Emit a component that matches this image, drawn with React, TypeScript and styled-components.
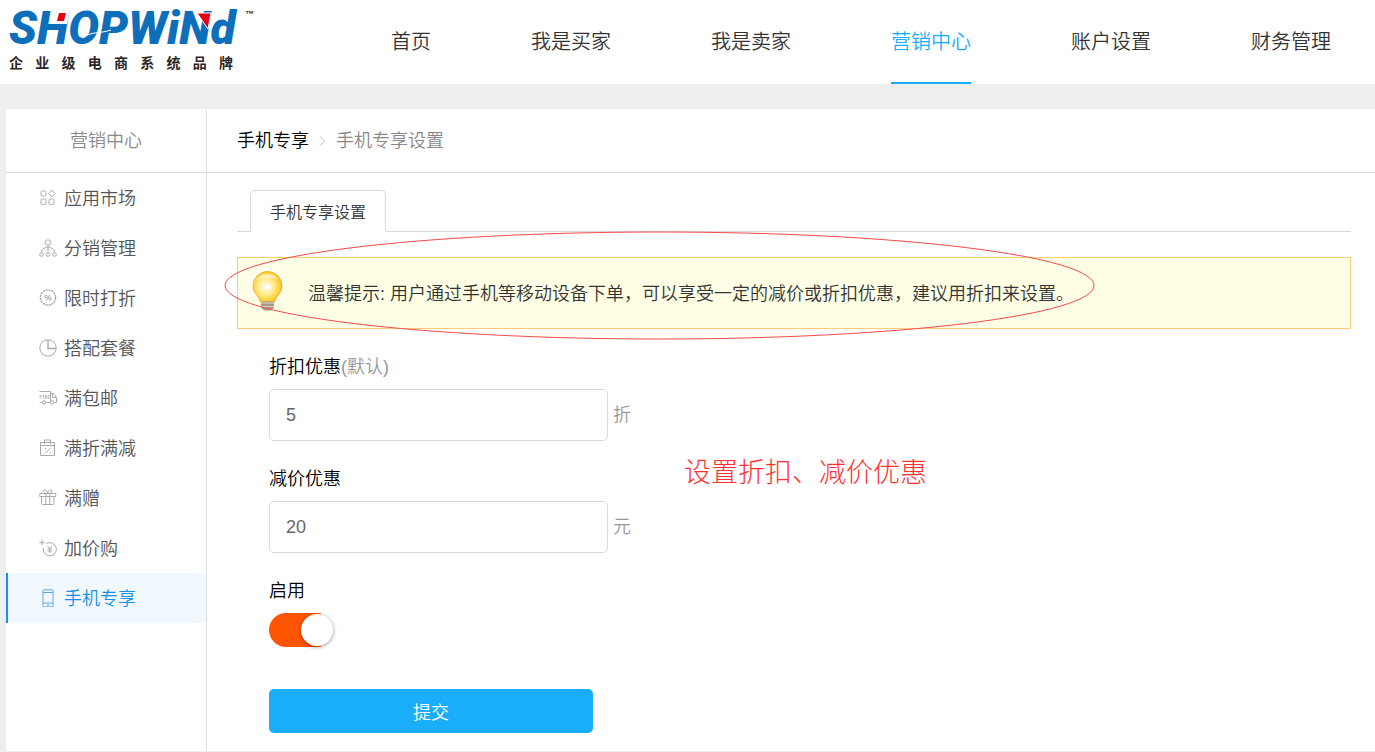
import React, { useState } from "react";
import styled, { createGlobalStyle } from "styled-components";

const sans = `"Liberation Sans", "Noto Sans CJK SC", sans-serif`;

const GlobalStyle = createGlobalStyle`
  *, *::before, *::after { box-sizing: border-box; }
  body {
    margin: 0;
    background: #edefee;
    font-family: ${sans};
    font-size: 18px;
    font-weight: 350;
    line-height: 24px;
    color: #555;
  }
  a { color: inherit; text-decoration: none; }
  button, input { font-family: inherit; font-size: inherit; font-weight: inherit; }
`;

const Header = styled.header`
  display: flex;
  justify-content: space-between;
  height: 84px;
  padding: 0 44px 0 9px;
  background: #fff;
`;

const Brand = styled.a`
  display: flex;
  flex-direction: column;
`;

const Tagline = styled.span`
  display: flex;
  justify-content: space-between;
  width: 224px;
  margin-top: -2px;
  font-size: 14px;
  font-weight: 700;
  line-height: 18px;
  color: #2b2523;
`;

const Nav = styled.nav`
  display: flex;
  gap: 100px;
`;

const NavLink = styled.a<{ $active?: boolean }>`
  display: flex;
  align-items: center;
  padding-top: 2px;
  border-bottom: 2px solid ${(p) => (p.$active ? "#1aadfb" : "transparent")};
  font-size: 20px;
  white-space: nowrap;
  color: ${(p) => (p.$active ? "#1aadfb" : "#333")};
`;

const Panel = styled.div`
  display: grid;
  grid-template-columns: 201px 1fr;
  margin: 25px 0 1px 6px;
  background: #fff;
`;

const Sidebar = styled.aside`
  border-right: 1px solid #ddd;
`;

const SideTitle = styled.h2`
  display: flex;
  align-items: center;
  justify-content: center;
  height: 64px;
  margin: 0;
  border-bottom: 1px solid #ddd;
  font-size: 18px;
  font-weight: inherit;
  color: #888;
`;

const SideLink = styled.a<{ $active?: boolean }>`
  display: flex;
  align-items: center;
  gap: 7px;
  height: 50px;
  padding-left: 31px;
  border-left: 2px solid ${(p) => (p.$active ? "#1890e8" : "transparent")};
  background: ${(p) => (p.$active ? "#f1f8ff" : "transparent")};
  color: ${(p) => (p.$active ? "#1890e8" : "#555")};

  svg {
    color: ${(p) => (p.$active ? "#5fa8ee" : "#aaa")};
  }

  span {
    padding-top: 2px;
  }
`;

const Crumbs = styled.nav`
  display: flex;
  align-items: center;
  gap: 10px;
  height: 64px;
  padding-left: 30px;
  border-bottom: 1px solid #ddd;
  color: #888;

  a { color: #000; }
`;

const Content = styled.div`
  padding: 17px 24px 18px 30px;
`;

const Tabs = styled.div`
  display: flex;
  height: 42px;
  padding-left: 13px;
  border-bottom: 1px solid #d9d9d9;
`;

const Tab = styled.button`
  height: 42px;
  padding: 0 19px;
  border: 1px solid #d9d9d9;
  border-bottom-color: #fff;
  border-radius: 5px 5px 0 0;
  background: #fff;
  font-size: 16px;
  color: #333;
`;

const Tip = styled.div`
  position: relative;
  display: flex;
  align-items: center;
  gap: 20px;
  min-height: 72px;
  margin-top: 25px;
  padding-left: 10px;
  border: 1px solid #fbcb7c;
  background: #ffffe5;
  color: #333;

  p {
    margin: 0;
    padding-top: 2px;
  }
`;

const Ring = styled.svg`
  position: absolute;
  left: -14px;
  top: -27px;
  pointer-events: none;
`;

const Form = styled.form`
  position: relative;
  display: flex;
  flex-direction: column;
  align-items: flex-start;
  gap: 26px;
  padding: 26px 0 0 32px;
`;

const Note = styled.span`
  position: absolute;
  left: 447px;
  top: 128px;
  font-family: "Liberation Serif", "Noto Sans CJK SC", serif;
  font-size: 27px;
  font-weight: 300;
  line-height: 32px;
  color: #ff3030;
`;

const Field = styled.div`
  display: flex;
  flex-direction: column;
  gap: 10px;
`;

const Label = styled.label`
  color: #000;
`;

const Muted = styled.span`
  color: #999;
`;

const InputRow = styled.div`
  display: flex;
  align-items: center;
  gap: 5px;
`;

const TextInput = styled.input`
  width: 339px;
  height: 52px;
  padding: 0 16px;
  border: 1px solid #d9d9d9;
  border-radius: 5px;
  background: #fff;
  font-weight: 400;
  color: #666;
`;

const Switch = styled.input`
  appearance: none;
  display: flex;
  align-items: center;
  width: 65px;
  height: 34px;
  margin: 0;
  padding: 0 1px;
  border-radius: 17px;
  background: #dfdfdf;
  cursor: pointer;

  &::before {
    content: "";
    width: 32px;
    height: 32px;
    border-radius: 50%;
    background: #fff;
    box-shadow: 0 1px 4px rgba(0, 0, 0, 0.4);
  }

  &:checked {
    justify-content: flex-end;
    background: linear-gradient(to right, #ff5500 52px, #fff 52px);
  }
`;

const Submit = styled.button`
  width: 324px;
  height: 44px;
  margin-top: 16px;
  border: 0;
  border-radius: 5px;
  background: #1aadf9;
  color: #fff;
  cursor: pointer;
`;

const Logo = () => (
  <svg width="250" height="56" viewBox="0 -4 250 56" aria-label="ShopWind">
    <text x="0" y="40" fontFamily="Roboto, sans-serif" fontSize="46" fontWeight="900" fontStyle="italic" fill="#0d6fba">
      SHOPWiNd
    </text>
    <path d="M47 5h14l-3 15H44z" fill="#fff" />
    <path d="M50 9h7l-2 8h-7z" fill="#e60012" />
    <path d="M74 34c8-7 16-4 28-8" fill="none" stroke="#fff" strokeWidth="1" />
    <path d="M188 9h14l-3 16z" fill="#e60012" stroke="#fff" />
    <text x="236" y="13" fontFamily="Liberation Sans, sans-serif" fontSize="9" fontWeight="700" fill="#222">™</text>
  </svg>
);

const icons: Record<string, React.ReactNode> = {
  apps: (
    <>
      <rect x="2" y="2" width="5" height="5" rx="1.5" />
      <path d="M12.800 1.200l3.200 3.300-3.200 3.300-3.200-3.300z" />
      <rect x="2" y="10" width="5" height="5.500" rx="1.500" />
      <rect x="10" y="10" width="5" height="5.500" rx="1.500" />
    </>
  ),
  tree: (
    <>
      <circle cx="9" cy="3.500" r="2.700" />
      <path d="M9 6.200v7M2.500 13c0-3 3-4.500 6.500-5 3.500.5 6.500 2 6.500 5" />
      <circle cx="2.500" cy="15.500" r="1.800" />
      <circle cx="9" cy="15.500" r="1.800" />
      <circle cx="15.500" cy="15.500" r="1.800" />
    </>
  ),
  percent: (
    <>
      <circle cx="9" cy="8.500" r="7.600" strokeDasharray="2.400 0.600" strokeWidth="1.300" />
      <circle cx="7" cy="7.500" r="1.200" />
      <circle cx="11" cy="9.800" r="1.200" />
      <path d="M10.800 5.800L7.200 11.500" />
    </>
  ),
  pie: (
    <>
      <circle cx="9" cy="9" r="8.200" />
      <path d="M9 1v8.500h8" strokeWidth="1.400" />
    </>
  ),
  truck: (
    <>
      <path d="M.5 2.500h11v9.500M11.500 4.500h3l3 4v5h-2M.5 13.500h2M7 13.500h4M13.500 5v3.500h3.500" />
      <path d="M1 6.500v3M1 6.500h1.500M1 8h1.200M4 9.500v-3h1v1.500H4M8 6.500H6.500v3H8M6.500 8H8M10.500 6.500H9v3h1.500M9 8h1.500" strokeWidth=".7" />
      <circle cx="5" cy="13.500" r="1.800" />
      <circle cx="13" cy="13.500" r="1.800" />
    </>
  ),
  bag: (
    <>
      <path d="M1.500 3.500h14v13h-14zM1.500 6.500h14M5.500 5V1h6v4" />
      <path d="M11.500 9l-5 5M6 9.500h1M11 13.500h1" />
    </>
  ),
  gift: (
    <path d="M.8 4.500h16v3h-16zM2.500 7.500v7a1 1 0 001 1h10.500a1 1 0 001-1v-7M6.800 4.500v11M10.800 4.500v11M8.800 4.500C7 4.500 4 3.500 4.500 1.500c1-2 4 0 4.300 3 .3-3 3.300-5 4.300-3 .5 2-2.500 3-4.300 3" />
  ),
  addYen: (
    <>
      <path d="M3 1v5.500M.2 3.700h5.600" />
      <path d="M7.500 4.500A6.600 6.600 0 114.300 9" />
      <path d="M8.500 7l2.300 2.800L13 7M10.800 9.800v4.200M8.500 10h4.600M8.500 12h4.600" />
    </>
  ),
  phone: (
    <path d="M5 .8h8a1 1 0 011 1v15a1 1 0 01-1 1H5a1 1 0 01-1-1v-15a1 1 0 011-1zM4 3.500h10M4 14h10M8 16h2" />
  ),
};

const Icon = ({ name }: { name: string }) => (
  <svg width="18" height="18" viewBox="0 0 18 18" fill="none" stroke="currentColor" strokeWidth="1" aria-hidden="true">
    {icons[name]}
  </svg>
);

const Bulb = () => (
  <svg width="40" height="52" viewBox="0 0 40 52" aria-hidden="true">
    <defs>
      <radialGradient id="halo">
        <stop offset="0.7" stopColor="#fff" />
        <stop offset="1" stopColor="#fff" stopOpacity="0" />
      </radialGradient>
      <radialGradient id="glass" cx="0.45" cy="0.5" r="0.55">
        <stop offset="0" stopColor="#fffef0" />
        <stop offset="0.5" stopColor="#ffec8c" />
        <stop offset="1" stopColor="#fdc012" />
      </radialGradient>
    </defs>
    <circle cx="19" cy="19" r="20" fill="url(#halo)" />
    <path d="M19.500 4.500A14.500 14.500 0 005 19c0 7 6 10 7.500 16h14C28 29 34 26 34 19A14.500 14.500 0 0019.500 4.500z" fill="url(#glass)" stroke="#f6b51a" />
    <path d="M8.500 13c3-7 18-9 22 0-7-3-15-3-22 0z" fill="#fff" opacity=".5" />
    <circle cx="20" cy="20" r="3" fill="#fff" opacity=".8" />
    <path d="M13 34.500h13v6l-3 3h-7l-3-3z" fill="#a69787" />
    <path d="M13 36h13M13 39.500h13" stroke="#ded5cc" />
  </svg>
);

const navItems = ["首页", "我是买家", "我是卖家", "营销中心", "账户设置", "财务管理"];

const sideItems = [
  { icon: "apps", text: "应用市场" },
  { icon: "tree", text: "分销管理" },
  { icon: "percent", text: "限时打折" },
  { icon: "pie", text: "搭配套餐" },
  { icon: "truck", text: "满包邮" },
  { icon: "bag", text: "满折满减" },
  { icon: "gift", text: "满赠" },
  { icon: "addYen", text: "加价购" },
  { icon: "phone", text: "手机专享" },
];

export default function App() {
  const [discount, setDiscount] = useState("5");
  const [reduction, setReduction] = useState("20");
  const [enabled, setEnabled] = useState(true);

  return (
    <>
      <GlobalStyle />
      <Header>
        <Brand href="#">
          <Logo />
          <Tagline>
            {[..."企业级电商系统品牌"].map((char) => (
              <span key={char}>{char}</span>
            ))}
          </Tagline>
        </Brand>
        <Nav>
          {navItems.map((item) => (
            <NavLink key={item} href="#" $active={item === "营销中心"}>
              {item}
            </NavLink>
          ))}
        </Nav>
      </Header>

      <Panel>
        <Sidebar>
          <SideTitle>营销中心</SideTitle>
          {sideItems.map(({ icon, text }) => (
            <SideLink key={text} href="#" $active={text === "手机专享"}>
              <Icon name={icon} />
              <span>{text}</span>
            </SideLink>
          ))}
        </Sidebar>

        <main>
          <Crumbs>
            <a href="#">手机专享</a>
            <svg width="7" height="12" viewBox="0 0 7 12" fill="none" stroke="#bbb" aria-hidden="true">
              <path d="M1 1.500L5.500 6 1 10.500" />
            </svg>
            <span>手机专享设置</span>
          </Crumbs>

          <Content>
            <Tabs>
              <Tab type="button">手机专享设置</Tab>
            </Tabs>

            <Tip>
              <Bulb />
              <p>温馨提示: 用户通过手机等移动设备下单，可以享受一定的减价或折扣优惠，建议用折扣来设置。</p>
              <Ring width="871" height="110" viewBox="0 0 871 110" fill="none" stroke="#f8494b" aria-hidden="true">
                <ellipse cx="435.500" cy="54.500" rx="434.500" ry="53.500" />
              </Ring>
            </Tip>

            <Form onSubmit={(e) => e.preventDefault()}>
              <Field>
                <Label htmlFor="discount">
                  折扣优惠<Muted>(默认)</Muted>
                </Label>
                <InputRow>
                  <TextInput id="discount" value={discount} onChange={(e) => setDiscount(e.target.value)} />
                  <Muted>折</Muted>
                </InputRow>
              </Field>
              <Field>
                <Label htmlFor="reduction">减价优惠</Label>
                <InputRow>
                  <TextInput id="reduction" value={reduction} onChange={(e) => setReduction(e.target.value)} />
                  <Muted>元</Muted>
                </InputRow>
              </Field>
              <Field>
                <Label htmlFor="enabled">启用</Label>
                <Switch
                  id="enabled"
                  type="checkbox"
                  checked={enabled}
                  onChange={(e) => setEnabled(e.target.checked)}
                />
              </Field>
              <Submit type="submit">提交</Submit>
              <Note>设置折扣、减价优惠</Note>
            </Form>
          </Content>
        </main>
      </Panel>
    </>
  );
}
